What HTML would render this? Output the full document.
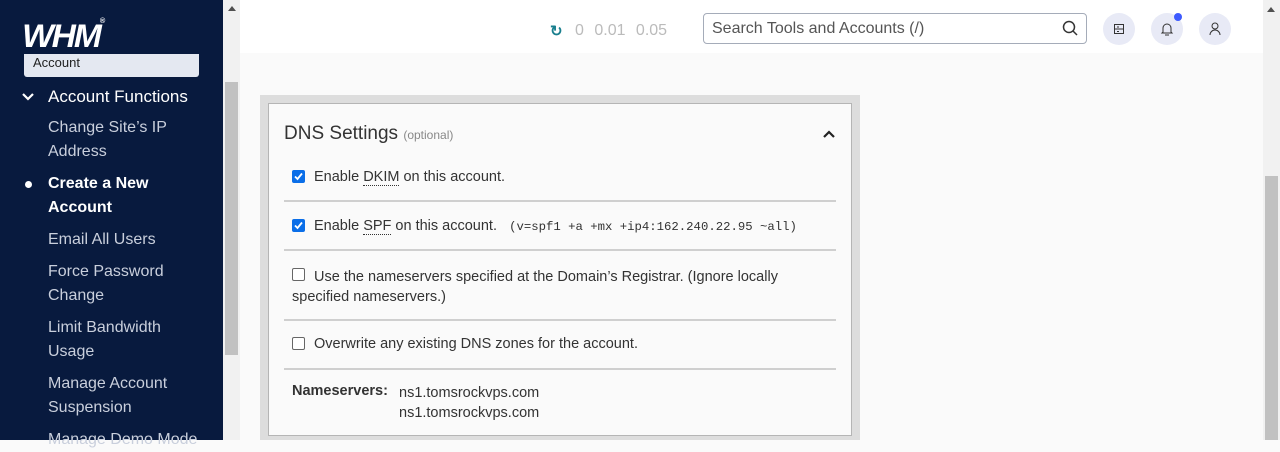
<!DOCTYPE html>
<html><head><style>
*{margin:0;padding:0;box-sizing:border-box}
body{width:1280px;height:440px;overflow:hidden;background:#fafafa;font-family:"Liberation Sans",sans-serif;position:relative}
.a{position:absolute}
#side{left:0;top:0;width:223px;height:440px;background:#081a3e}
.nav{position:absolute;left:48px;color:#c9cfdc;font-size:16px;line-height:24px}
.ot{font-family:"Liberation Sans",sans-serif;color:#333;font-size:14.5px}
.sep{position:absolute;left:284px;width:552px;height:2px;background:#cfcfcf}
.cb{position:absolute;left:292px;width:13px;height:13px;border-radius:2px}
.on{background:#0a6ee8}
.off{border:1px solid #666;background:#fff}
</style></head><body>
<div id="side" class="a">
 <div class="a" style="left:24px;top:18px;color:#fff;font-size:32px;font-weight:bold;font-style:italic;letter-spacing:-2px;transform:scaleX(1.05)">WHM<span style="font-size:7px;vertical-align:top">®</span></div>
 <div class="a" style="left:24px;top:54px;width:175px;height:23px;background:#e4e8f1;border-radius:0 0 3px 3px;color:#222;font-size:13px;padding:1px 9px">Account</div>
 <svg class="a" style="left:21px;top:92px" width="14" height="10"><path d="M2 2l5 5 5-5" stroke="#fff" stroke-width="2.2" fill="none"/></svg>
 <div class="nav" style="top:85px;color:#fff;font-size:17px">Account Functions</div>
 <div class="nav" style="top:116px">Change Site’s IP<br>Address</div>
 <div class="a" style="left:25px;top:181px;width:7px;height:7px;border-radius:50%;background:#fff"></div>
 <div class="nav" style="top:172px;color:#fff;font-weight:bold">Create a New<br>Account</div>
 <div class="nav" style="top:228px">Email All Users</div>
 <div class="nav" style="top:260px">Force Password<br>Change</div>
 <div class="nav" style="top:316px">Limit Bandwidth<br>Usage</div>
 <div class="nav" style="top:372px">Manage Account<br>Suspension</div>
 <div class="nav" style="top:428px">Manage Demo Mode</div>
</div>
<div class="a" style="left:223px;top:0;width:17px;height:440px;background:#f1f1f1"></div>
<div class="a" style="left:225px;top:82px;width:13px;height:273px;background:#c1c1c1"></div>
<div class="a" style="left:228px;top:6px;width:0;height:0;border:4px solid transparent;border-bottom:5px solid #505050;border-top:0"></div>
<div class="a" style="left:240px;top:0;width:1023px;height:53px;background:#fff"></div>
<div class="a" style="left:550px;top:22px;color:#1a7f8e;font-size:15px;font-weight:bold">↻</div>
<div class="a" style="left:575px;top:22px;color:#bbb;font-size:16px;word-spacing:6px">0 0.01 0.05</div>
<div class="a" style="left:703px;top:13px;width:384px;height:31px;border:1px solid #a5acb9;border-radius:4px;background:#fff"></div>
<div class="a" style="left:712px;top:20px;color:#555;font-size:16px">Search Tools and Accounts (/)</div>
<svg class="a" style="left:1062px;top:20px" width="16" height="16"><circle cx="7" cy="7" r="5.5" stroke="#333" stroke-width="1.5" fill="none"/><path d="M11 11l4 4" stroke="#333" stroke-width="1.5"/></svg>
<div class="a" style="left:1103px;top:13px;width:32px;height:32px;border-radius:50%;background:#e8eaf6"></div>
<svg class="a" style="left:1113px;top:23px" width="12" height="12"><rect x="1.5" y="1.5" width="9" height="9" stroke="#333" fill="none"/><path d="M1.5 6h9M4 4h2M4 8.5h2" stroke="#333"/></svg>
<div class="a" style="left:1151px;top:13px;width:32px;height:32px;border-radius:50%;background:#e8eaf6"></div>
<svg class="a" style="left:1160px;top:21px" width="14" height="16"><path d="M3 11V7a4 4 0 018 0v4l1 1H2z" stroke="#333" fill="none"/><path d="M5 14h4" stroke="#333"/></svg>
<div class="a" style="left:1174px;top:13px;width:8px;height:8px;border-radius:50%;background:#3d5afe"></div>
<div class="a" style="left:1199px;top:13px;width:32px;height:32px;border-radius:50%;background:#e8eaf6"></div>
<svg class="a" style="left:1208px;top:21px" width="14" height="16"><circle cx="7" cy="5" r="3" stroke="#333" fill="none"/><path d="M2 14a5 5 0 0110 0" stroke="#333" fill="none"/></svg>
<div class="a" style="left:1263px;top:0;width:17px;height:440px;background:#f1f1f1"></div>
<div class="a" style="left:1265px;top:176px;width:13px;height:264px;background:#c1c1c1"></div>
<div class="a" style="left:1267px;top:7px;width:0;height:0;border:4px solid transparent;border-bottom:5px solid #505050;border-top:0"></div>
<div class="a" style="left:260px;top:95px;width:600px;height:345px;background:#ddd"></div>
<div class="a" style="left:268px;top:103px;width:584px;height:333px;background:#fafafa;border:1px solid #b5b5b5"></div>
<div class="a ot" style="left:284px;top:123px;font-size:19px;color:#333">DNS Settings <span style="font-size:12px;color:#888">(optional)</span></div>
<svg class="a" style="left:822px;top:129px" width="14" height="10"><path d="M2 8l5-5 5 5" stroke="#222" stroke-width="2.2" fill="none"/></svg>
<div class="cb on" style="top:170px"></div><svg class="a" style="left:294px;top:172px" width="9" height="9"><path d="M1 4.5l2.5 2.5 4.5-5.5" stroke="#fff" stroke-width="1.8" fill="none"/></svg>
<div class="a ot" style="left:314px;top:169px">Enable <span style="border-bottom:1px dotted #333">DKIM</span> on this account.</div>
<div class="sep" style="top:200px"></div>
<div class="cb on" style="top:219px"></div><svg class="a" style="left:294px;top:221px" width="9" height="9"><path d="M1 4.5l2.5 2.5 4.5-5.5" stroke="#fff" stroke-width="1.8" fill="none"/></svg>
<div class="a ot" style="left:314px;top:218px">Enable <span style="border-bottom:1px dotted #333">SPF</span> on this account. &nbsp;&nbsp;<span style="font-family:'Liberation Mono',monospace;font-size:12.3px">(v=spf1 +a +mx +ip4:162.240.22.95 ~all)</span></div>
<div class="sep" style="top:249px"></div>
<div class="cb off" style="top:268px"></div>
<div class="a ot" style="left:292px;top:267px;line-height:20px;width:540px;text-indent:22px">Use the nameservers specified at the Domain’s Registrar. (Ignore locally specified nameservers.)</div>
<div class="sep" style="top:319px"></div>
<div class="cb off" style="top:337px"></div>
<div class="a ot" style="left:314px;top:336px">Overwrite any existing DNS zones for the account.</div>
<div class="sep" style="top:368px"></div>
<div class="a ot" style="left:292px;top:383px;font-weight:bold">Nameservers:</div>
<div class="a ot" style="left:399px;top:383px;line-height:20px">ns1.tomsrockvps.com<br>ns1.tomsrockvps.com</div>
</body></html>
